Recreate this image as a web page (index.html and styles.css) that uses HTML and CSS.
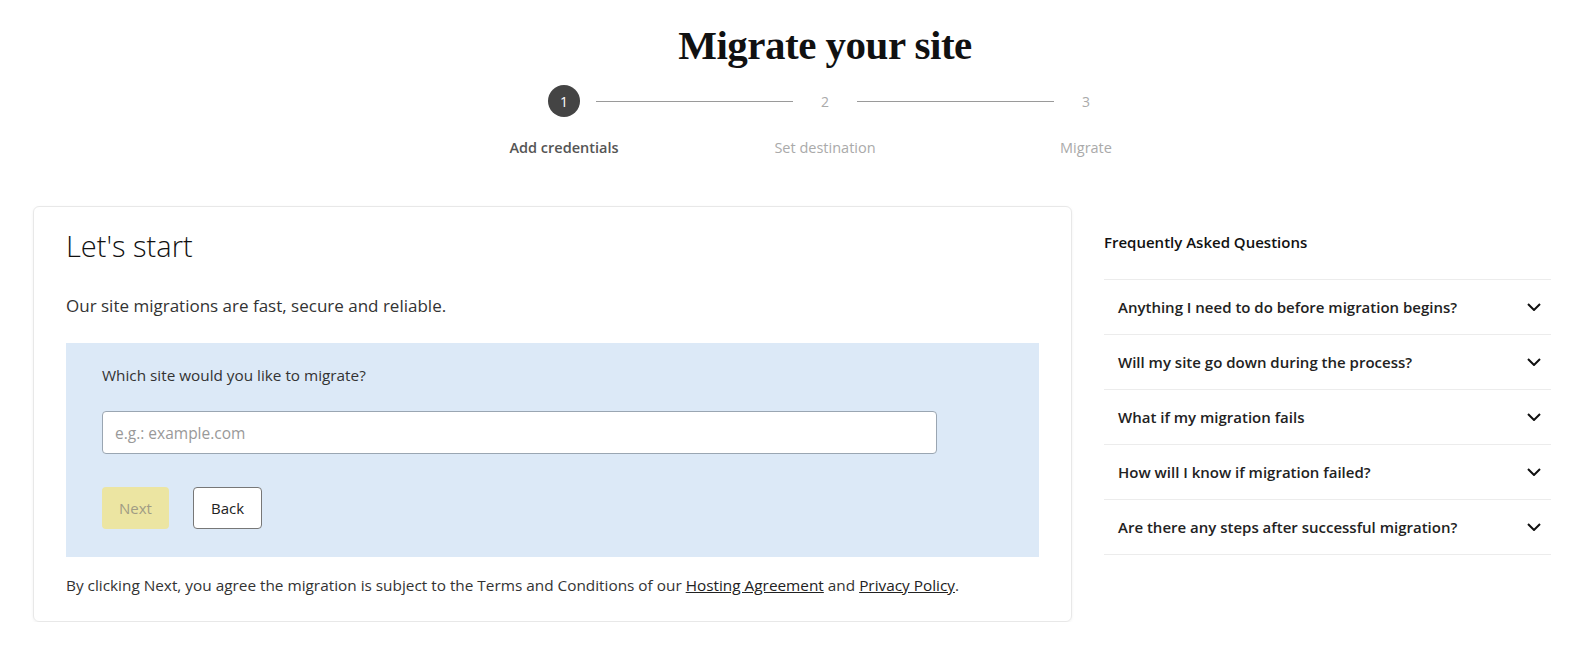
FILE: index.html
```html
<!DOCTYPE html>
<html lang="en">
<head>
    <meta charset="UTF-8">
    <meta name="viewport" content="width=device-width, initial-scale=1.0">
    <title>Migrate your site</title>
    <link rel="stylesheet" href="styles.css">
</head>
<body>
    <div class="page">
        <header class="header">
            <h1 class="title">Migrate your site</h1>
            <ol class="stepper">
                <li class="step active">
                    <div class="track"><span class="line hidden"></span><span class="marker">1</span><span class="line"></span></div>
                    <span class="label">Add credentials</span>
                </li>
                <li class="step">
                    <div class="track"><span class="line"></span><span class="marker">2</span><span class="line"></span></div>
                    <span class="label">Set destination</span>
                </li>
                <li class="step">
                    <div class="track"><span class="line"></span><span class="marker">3</span><span class="line hidden"></span></div>
                    <span class="label">Migrate</span>
                </li>
            </ol>
        </header>

        <div class="content">
            <section class="card">
                <h2 class="card-title">Let's start</h2>
                <p class="intro">Our site migrations are fast, secure and reliable.</p>
                <form class="site-form">
                    <label class="form-label" for="site">Which site would you like to migrate?</label>
                    <input class="input" id="site" type="text" placeholder="e.g.: example.com">
                    <div class="actions">
                        <button class="btn btn-next" type="button" disabled>Next</button>
                        <button class="btn btn-back" type="button">Back</button>
                    </div>
                </form>
                <p class="terms">By clicking Next, you agree the migration is subject to the Terms and Conditions of our <a href="#">Hosting Agreement</a> and <a href="#">Privacy Policy</a>.</p>
            </section>

            <aside class="faq">
                <h3 class="faq-title">Frequently Asked Questions</h3>
                <ul class="faq-list">
                    <li class="faq-item"><span>Anything I need to do before migration begins?</span><svg class="chevron" viewBox="0 0 14 8"><path d="M1 1l6 6 6-6"/></svg></li>
                    <li class="faq-item"><span>Will my site go down during the process?</span><svg class="chevron" viewBox="0 0 14 8"><path d="M1 1l6 6 6-6"/></svg></li>
                    <li class="faq-item"><span>What if my migration fails</span><svg class="chevron" viewBox="0 0 14 8"><path d="M1 1l6 6 6-6"/></svg></li>
                    <li class="faq-item"><span>How will I know if migration failed?</span><svg class="chevron" viewBox="0 0 14 8"><path d="M1 1l6 6 6-6"/></svg></li>
                    <li class="faq-item"><span>Are there any steps after successful migration?</span><svg class="chevron" viewBox="0 0 14 8"><path d="M1 1l6 6 6-6"/></svg></li>
                </ul>
            </aside>
        </div>
    </div>
</body>
</html>
```

FILE: styles.css
```css
body {
    margin: 0;
    background-color: #fff;
    color: #111;
    font-family: "Open Sans", "Noto Sans", Arial, sans-serif;
}
.page {
    padding: 0 33px;
}
.header {
    padding-left: 59px;
    text-align: center;
}
.title {
    margin: 0;
    padding-top: 21px;
    font-family: "Liberation Serif", "DejaVu Serif", serif;
    font-size: 41px;
    line-height: 48px;
    font-weight: bold;
    letter-spacing: -0.5px;
}
.stepper {
    display: flex;
    justify-content: center;
    list-style: none;
    margin: 16px 0 0;
    padding: 0;
}
.step {
    width: 261px;
    display: flex;
    flex-direction: column;
    align-items: center;
}
.track {
    width: 100%;
    display: flex;
    align-items: center;
    height: 32px;
}
.line {
    flex: 1;
    height: 1px;
    background-color: #9a9a9a;
}
.line.hidden {
    background-color: transparent;
}
.marker {
    width: 32px;
    height: 32px;
    margin: 0 16px;
    border-radius: 50%;
    display: flex;
    justify-content: center;
    align-items: center;
    font-size: 14px;
    color: #aaa;
}
.step.active .marker {
    background-color: #444;
    color: #fff;
}
.label {
    margin-top: 21px;
    font-size: 14.5px;
    color: #aaa;
}
.step.active .label {
    color: #555;
    font-weight: 600;
}
.content {
    display: flex;
    align-items: flex-start;
    gap: 32px;
    margin-top: 49px;
}
.card {
    width: 1039px;
    box-sizing: border-box;
    border: 1px solid #e8e8e8;
    border-radius: 6px;
    box-shadow: 0 1px 3px rgba(0, 0, 0, 0.06);
    padding: 23px 32px 25px;
}
.card-title {
    margin: 0;
    font-size: 29px;
    line-height: 32px;
    font-weight: 300;
    color: #111;
}
.intro {
    margin: 32px 0 0;
    font-size: 17px;
    line-height: 24px;
    color: #333;
}
.site-form {
    margin-top: 25px;
    background-color: #dce9f7;
    padding: 21px 102px 28px 36px;
    display: flex;
    flex-direction: column;
}
.form-label {
    font-size: 15.3px;
    line-height: 22px;
    color: #333;
}
.input {
    margin-top: 25px;
    height: 43px;
    box-sizing: border-box;
    border: 1px solid #9aa6b2;
    border-radius: 4px;
    padding: 0 12px;
    font-family: inherit;
    font-size: 15.5px;
    background-color: #fff;
}
.input::placeholder {
    color: #999;
}
.actions {
    display: flex;
    gap: 24px;
    margin-top: 33px;
}
.btn {
    height: 42px;
    box-sizing: border-box;
    border-radius: 4px;
    font-family: inherit;
    font-size: 15px;
    font-weight: 500;
    padding: 0 16px;
}
.btn-next {
    background-color: #ece5a2;
    border: none;
    color: #a09c84;
    width: 67px;
}
.btn-back {
    background-color: #fff;
    border: 1px solid #777;
    color: #222;
    width: 69px;
}
.terms {
    margin: 17px 0 0;
    font-size: 15.35px;
    line-height: 22px;
    color: #333;
}
.terms a {
    color: #222;
}
.faq {
    width: 447px;
    padding-top: 24px;
}
.faq-title {
    margin: 0;
    font-size: 15px;
    line-height: 24px;
    font-weight: 600;
    color: #111;
}
.faq-list {
    list-style: none;
    margin: 25px 0 0;
    padding: 0;
    border-top: 1px solid #ececec;
}
.faq-item {
    display: flex;
    justify-content: space-between;
    align-items: center;
    height: 54px;
    padding: 0 10px 0 14px;
    border-bottom: 1px solid #ececec;
    font-size: 15px;
    font-weight: 600;
    color: #222;
}
.chevron {
    width: 14px;
    height: 8px;
    fill: none;
    stroke: #111;
    stroke-width: 2;
}
```
